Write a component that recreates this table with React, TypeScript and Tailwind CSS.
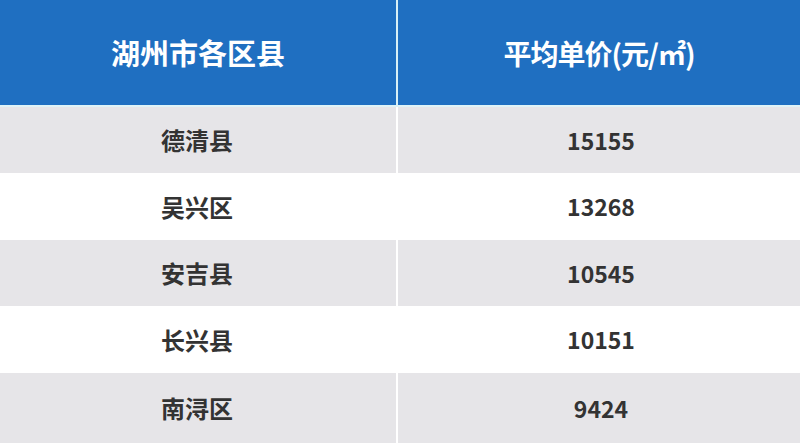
const rows = [
  { name: "德清县", price: "15155" },
  { name: "吴兴区", price: "13268" },
  { name: "安吉县", price: "10545" },
  { name: "长兴县", price: "10151" },
  { name: "南浔区", price: "9424" },
]

const heights = ["h-[66px]", "h-[67px]", "h-[66px]", "h-[67px]", "h-[70px]"]

export default function App() {
  return (
    <div
      className="w-[800px] h-[443px] overflow-hidden bg-white"
      style={{ fontFamily: '"Noto Sans CJK SC", "Noto Sans", sans-serif' }}
    >
      {/* header */}
      <div className="flex h-[107px] bg-[#1f6fc1] border-b-2 border-[#dff3f7] text-white font-bold">
        <div className="w-[396px] flex items-center justify-center text-[29px] pt-[1px]">
          湖州市各区县
        </div>
        <div className="w-[2px] bg-[#d8f0f6]" />
        <div className="flex-1 flex items-center justify-center text-[28px] tracking-[-1px] pt-[1px]">
          平均单价(元/㎡)
        </div>
      </div>

      {rows.map((r, i) => (
        <div
          key={r.name}
          className={`flex ${heights[i]} text-[#333333] font-bold ${
            i % 2 === 0 ? "bg-[#e6e5e8]" : "bg-white"
          }`}
        >
          <div className="w-[396px] flex items-center justify-center pr-[2px] text-[24px]">{r.name}</div>
          <div className="w-[2px] bg-white" />
          <div className="flex-1 flex items-center justify-center pl-[4px] text-[23px]">{r.price}</div>
        </div>
      ))}
    </div>
  )
}
